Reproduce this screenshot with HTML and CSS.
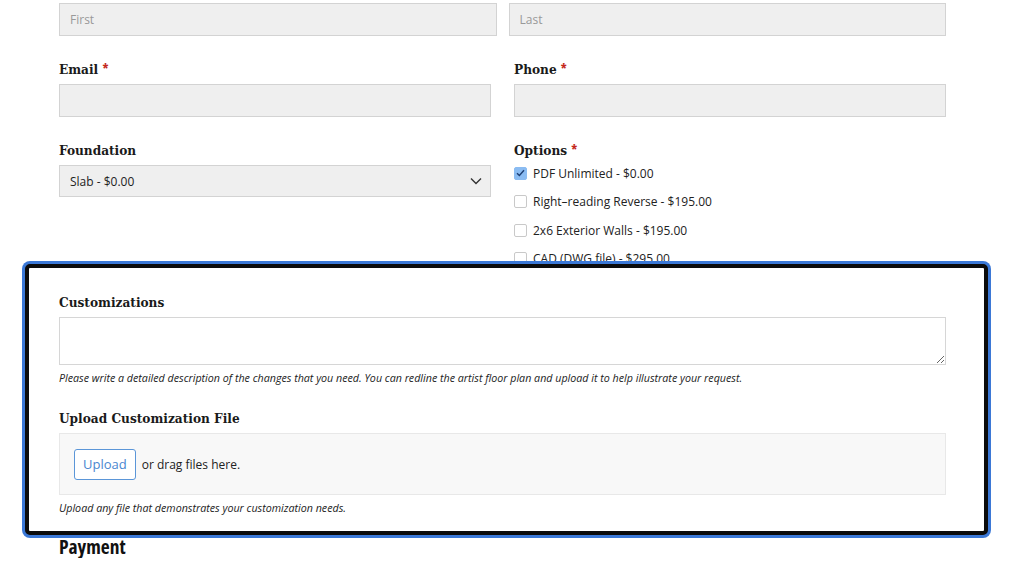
FILE: index.html
```html
<!DOCTYPE html>
<html lang="en">
<head>
    <meta charset="UTF-8">
    <meta name="viewport" content="width=device-width, initial-scale=1.0">
    <title>Plan Order Form</title>
    <link rel="stylesheet" href="styles.css">
</head>
<body>
    <form class="order-form">
        <div class="row row-name">
            <input type="text" class="field-input" placeholder="First">
            <input type="text" class="field-input" placeholder="Last">
        </div>

        <div class="row">
            <div class="field">
                <label class="field-label">Email <span class="req">*</span></label>
                <input type="email" class="field-input">
            </div>
            <div class="field">
                <label class="field-label">Phone <span class="req">*</span></label>
                <input type="tel" class="field-input">
            </div>
        </div>

        <div class="row">
            <div class="field">
                <label class="field-label">Foundation</label>
                <div class="select-wrap">
                    <select class="field-input field-select">
                        <option>Slab - $0.00</option>
                        <option>Crawlspace - $0.00</option>
                        <option>Basement - $195.00</option>
                    </select>
                    <svg class="select-arrow" width="12" height="8" viewBox="0 0 12 8"><path d="M1 1.5 6 6.5 11 1.5" fill="none" stroke="#333" stroke-width="1.4"/></svg>
                </div>
            </div>
            <div class="field">
                <label class="field-label">Options <span class="req">*</span></label>
                <ul class="options">
                    <li><span class="check checked"><svg width="9" height="8" viewBox="0 0 9 8"><path d="M1 4.2 3.4 6.5 8 1.2" fill="none" stroke="#1d3f73" stroke-width="1.4"/></svg></span>PDF Unlimited - $0.00</li>
                    <li><span class="check"></span>Right&ndash;reading Reverse - $195.00</li>
                    <li><span class="check"></span>2x6 Exterior Walls - $195.00</li>
                    <li><span class="check"></span>CAD (DWG file) - $295.00</li>
                </ul>
            </div>
        </div>

        <div class="highlight">
            <label class="field-label">Customizations</label>
            <textarea class="custom-text"></textarea>
            <p class="help">Please write a detailed description of the changes that you need. You can redline the artist floor plan and upload it to help illustrate your request.</p>

            <label class="field-label label-upload">Upload Customization File</label>
            <div class="dropzone">
                <button type="button" class="upload-btn">Upload</button>
                <span>or drag files here.</span>
            </div>
            <p class="help">Upload any file that demonstrates your customization needs.</p>
        </div>

        <h2 class="section-title">Payment</h2>
    </form>
</body>
</html>
```

FILE: styles.css
```css
body {
    margin: 0;
    font-family: "Open Sans", "Noto Sans", sans-serif;
    color: #222;
    background-color: #fff;
}

.order-form {
    padding: 3px 78px 0 59px;
}

.row {
    display: grid;
    grid-template-columns: 1fr 1fr;
    column-gap: 23px;
    margin-bottom: 23px;
}

.row-name {
    column-gap: 12px;
}

.field {
    display: flex;
    flex-direction: column;
}

.field-label {
    display: block;
    height: 20px;
    font-family: "DejaVu Serif", serif;
    font-stretch: condensed;
    font-weight: bold;
    font-size: 13.5px;
    line-height: 20px;
    margin-bottom: 5px;
    color: #1a1a1a;
}

.req {
    color: #c4291c;
    font-family: "Open Sans", sans-serif;
}

.field-input {
    box-sizing: border-box;
    width: 100%;
    height: 33px;
    padding: 0 10px;
    background-color: #efefef;
    border: 1px solid #d3d3d3;
    border-radius: 0;
    font-family: "Open Sans", sans-serif;
    font-size: 12px;
    color: #222;
}

.field-input::placeholder {
    color: #999;
}

.select-wrap {
    position: relative;
}

.field-select {
    height: 32px;
    appearance: none;
    -webkit-appearance: none;
}

.select-arrow {
    position: absolute;
    right: 9px;
    top: 12px;
}

.options {
    list-style: none;
    margin: -6px 0 0;
    padding: 0;
    font-size: 12px;
}

.options li {
    display: flex;
    align-items: center;
    height: 28.5px;
}

.check {
    box-sizing: border-box;
    width: 13px;
    height: 13px;
    margin-right: 6px;
    border: 1px solid #c9c9c9;
    border-radius: 2px;
    background-color: #fff;
    display: flex;
    align-items: center;
    justify-content: center;
}

.check.checked {
    background-color: #8bbcf2;
    border-color: #8bbcf2;
}

.highlight {
    position: relative;
    z-index: 1;
    margin: -32px -42px 0 -34px;
    padding: 24px 38px 15px 30px;
    background-color: #fff;
    border: 4px solid #0b0b0b;
    border-radius: 5px;
    box-shadow: 0 0 0 3px #3b78d6;
}

.custom-text {
    display: block;
    box-sizing: border-box;
    width: 100%;
    height: 48px;
    margin: 1px 0 0;
    border: 1px solid #d6d6d6;
    background-color: #fff;
}

.help {
    margin: 5px 0 0;
    font-size: 10.7px;
    font-style: italic;
    line-height: 16px;
}

.label-upload {
    margin-top: 22px;
}

.dropzone {
    display: flex;
    align-items: center;
    gap: 6px;
    height: 62px;
    box-sizing: border-box;
    padding: 0 14px;
    background-color: #f8f8f8;
    border: 1px solid #e8e8e8;
    font-size: 12px;
}

.upload-btn {
    height: 31px;
    padding: 0 8px;
    background-color: #fff;
    border: 1px solid #5b96d8;
    border-radius: 3px;
    color: #4a86cf;
    font-family: "Open Sans", sans-serif;
    font-size: 13px;
}

.section-title {
    margin: 1px 0 0;
    font-family: "Open Sans", sans-serif;
    font-stretch: 75%;
    font-size: 19.5px;
    line-height: 22px;
    font-weight: bold;
    color: #111;
}
```
